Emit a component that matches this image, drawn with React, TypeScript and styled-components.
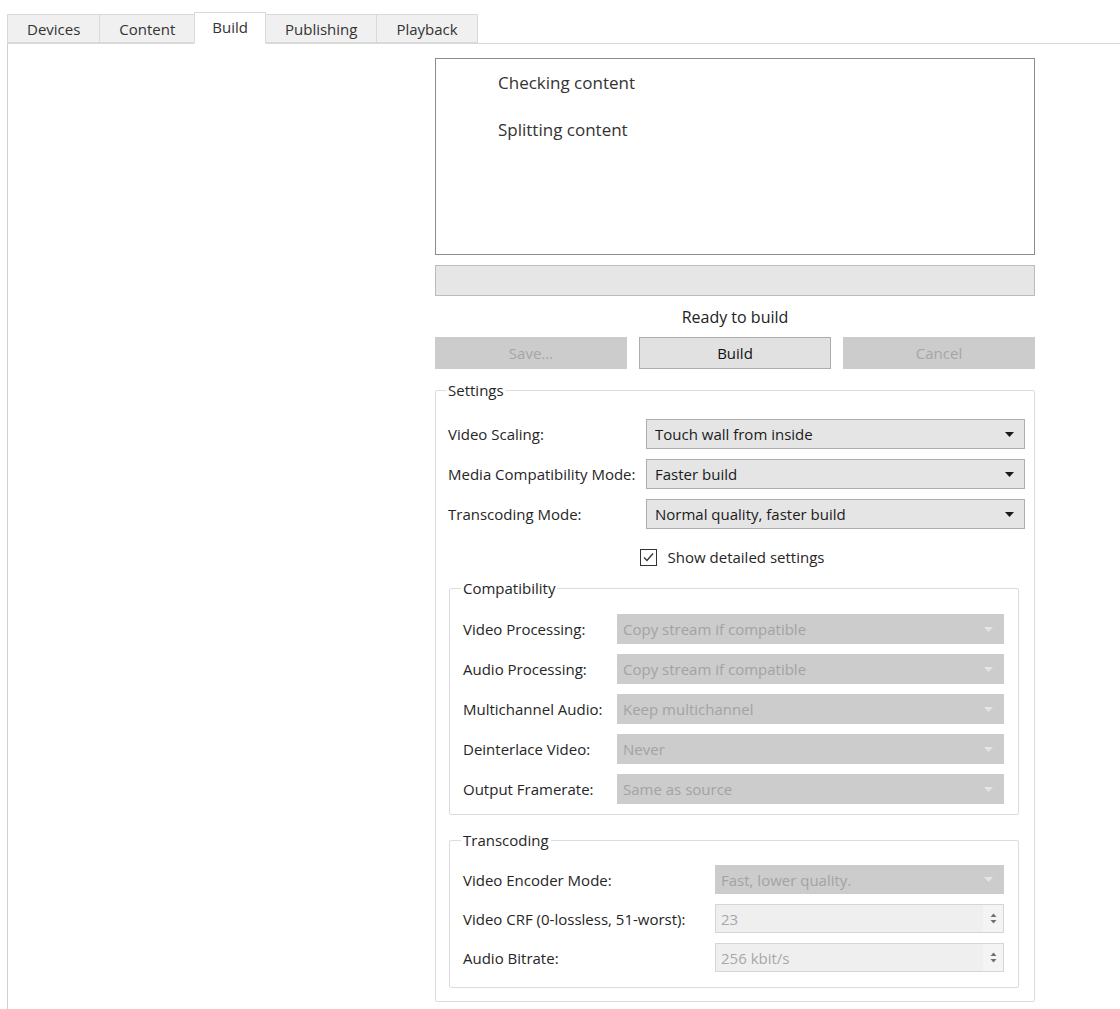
import styled, { createGlobalStyle } from 'styled-components';

const GlobalStyle = createGlobalStyle`
  html, body {
    margin: 0;
    background: #fff;
  }
  body {
    font-family: "Open Sans", "Noto Sans", sans-serif;
    font-size: 15px;
    color: #262626;
  }
`;

const Window = styled.div`
  display: flex;
  flex-direction: column;
  height: 1009px;
  box-sizing: border-box;
  padding: 12px 0 0 7px;
  overflow: hidden;
`;

const TabBar = styled.div`
  display: flex;
  align-items: flex-end;
  height: 31px;
  padding-left: 1px;
`;

const Tab = styled.div<{ $active?: boolean }>`
  position: relative;
  z-index: ${(p) => (p.$active ? 1 : 0)};
  display: flex;
  align-items: center;
  box-sizing: border-box;
  height: ${(p) => (p.$active ? 32 : 29)}px;
  margin: 0 0 ${(p) => (p.$active ? -1 : 0)}px -1px;
  padding: 0 ${(p) => (p.$active ? 17 : 19)}px ${(p) => (p.$active ? 2 : 0)}px;
  background: ${(p) => (p.$active ? '#fff' : '#f0f0f0')};
  border: 1px solid #d9d9d9;
  border-bottom-color: ${(p) => (p.$active ? '#fff' : '#d9d9d9')};
  color: #333;
`;

const Pane = styled.div`
  flex: 1;
  border-top: 1px solid #d9d9d9;
  border-left: 1px solid #d0d0d0;
  padding: 14px 0 0 427px;
`;

const Column = styled.div`
  display: flex;
  flex-direction: column;
  width: 600px;
`;

const LogBox = styled.div`
  height: 197px;
  box-sizing: border-box;
  border: 1px solid #8c8c8c;
  background: #fff;
  padding-left: 62px;
`;

const LogItem = styled.div`
  display: flex;
  align-items: center;
  height: 47px;
  font-size: 17px;
  color: #333;
`;

const ProgressBar = styled.div`
  height: 31px;
  margin-top: 10px;
  box-sizing: border-box;
  background: #e6e6e6;
  border: 1px solid #bcbcbc;
`;

const Status = styled.div`
  display: flex;
  align-items: center;
  justify-content: center;
  height: 41px;
  font-size: 16px;
  color: #222;
`;

const ButtonRow = styled.div`
  display: grid;
  grid-template-columns: repeat(3, 1fr);
  gap: 12px;
`;

const Button = styled.button`
  height: 32px;
  font: inherit;
  color: #111;
  background: #e1e1e1;
  border: 1px solid #adadad;

  &:disabled {
    color: #a6a6a6;
    background: #cccccc;
    border-color: #cccccc;
  }
`;

const Group = styled.fieldset<{ $pad: string; $margin: string }>`
  margin: ${(p) => p.$margin};
  padding: ${(p) => p.$pad};
  min-width: 0;
  border: 1px solid #dcdcdc;
  border-radius: 2px;
  display: flex;
  flex-direction: column;
`;

const Legend = styled.legend`
  padding: 0 2px;
  margin-left: -2px;
  line-height: 18px;
  color: #262626;
`;

const Rows = styled.div<{ $gap: number }>`
  display: flex;
  flex-direction: column;
  gap: ${(p) => p.$gap}px;
`;

const Row = styled.div<{ $label: number; $h: number }>`
  display: grid;
  grid-template-columns: ${(p) => p.$label}px 1fr;
  align-items: center;
  height: ${(p) => p.$h}px;
`;

const Label = styled.span`
  white-space: nowrap;
  color: #262626;
`;

const Combo = styled.div<{ $disabled?: boolean }>`
  display: flex;
  align-items: center;
  justify-content: space-between;
  height: 100%;
  box-sizing: border-box;
  padding: 0 10px 0 ${(p) => (p.$disabled ? 5 : 8)}px;
  background: ${(p) => (p.$disabled ? '#cccccc' : '#e5e5e5')};
  border: 1px solid ${(p) => (p.$disabled ? '#cccccc' : '#adadad')};
  color: ${(p) => (p.$disabled ? '#a3a3a3' : '#1a1a1a')};
`;

const ArrowWrap = styled.span<{ $disabled?: boolean }>`
  display: flex;
  color: ${(p) => (p.$disabled ? '#e4e4e4' : '#1a1a1a')};
`;

const Spin = styled.div`
  display: flex;
  align-items: center;
  justify-content: space-between;
  height: 100%;
  box-sizing: border-box;
  padding-left: 5px;
  background: #efefef;
  border: 1px solid #d6d6d6;
  color: #a8a8a8;
`;

const SpinButtons = styled.span`
  display: flex;
  align-items: center;
  justify-content: center;
  width: 20px;
  height: 100%;
  background: #f4f4f4;
  color: #707070;
`;

const CheckRow = styled.label`
  display: flex;
  align-items: center;
  justify-content: center;
  gap: 11px;
  height: 18px;
  margin-top: 19px;
  padding-right: 9px;
  color: #262626;
`;

const CheckBox = styled.span`
  display: flex;
  width: 17px;
  height: 17px;
  box-sizing: border-box;
  border: 1px solid #333;
  background: #fff;
`;

const DownArrow = ({ disabled }: { disabled?: boolean }) => (
  <ArrowWrap $disabled={disabled}>
    <svg width="9" height="5" viewBox="0 0 9 5">
      <path d="M0 0h9L4.5 5z" fill="currentColor" />
    </svg>
  </ArrowWrap>
);

const ComboBox = ({ value, disabled }: { value: string; disabled?: boolean }) => (
  <Combo $disabled={disabled}>
    <span>{value}</span>
    <DownArrow disabled={disabled} />
  </Combo>
);

const SpinBox = ({ value }: { value: string }) => (
  <Spin>
    <span>{value}</span>
    <SpinButtons>
      <svg width="7" height="13" viewBox="0 0 7 13">
        <path d="M0.5 5L3.5 1.5L6.5 5z" fill="currentColor" />
        <path d="M0.5 8L3.5 11.5L6.5 8z" fill="currentColor" />
      </svg>
    </SpinButtons>
  </Spin>
);

const tabs = ['Devices', 'Content', 'Build', 'Publishing', 'Playback'];

const mainSettings = [
  ['Video Scaling:', 'Touch wall from inside'],
  ['Media Compatibility Mode:', 'Faster build'],
  ['Transcoding Mode:', 'Normal quality, faster build'],
];

const compatSettings = [
  ['Video Processing:', 'Copy stream if compatible'],
  ['Audio Processing:', 'Copy stream if compatible'],
  ['Multichannel Audio:', 'Keep multichannel'],
  ['Deinterlace Video:', 'Never'],
  ['Output Framerate:', 'Same as source'],
];

export default function App() {
  return (
    <>
      <GlobalStyle />
      <Window>
        <TabBar>
          {tabs.map((t) => (
            <Tab key={t} $active={t === 'Build'}>
              {t}
            </Tab>
          ))}
        </TabBar>
        <Pane>
          <Column>
            <LogBox>
              <LogItem>Checking content</LogItem>
              <LogItem>Splitting content</LogItem>
            </LogBox>
            <ProgressBar />
            <Status>Ready to build</Status>
            <ButtonRow>
              <Button disabled>Save...</Button>
              <Button>Build</Button>
              <Button disabled>Cancel</Button>
            </ButtonRow>

            <Group $margin="12px 0 0" $pad="20px 9px 13px 12px">
              <Legend>Settings</Legend>
              <Rows $gap={10}>
                {mainSettings.map(([label, value]) => (
                  <Row key={label} $label={198} $h={30}>
                    <Label>{label}</Label>
                    <ComboBox value={value} />
                  </Row>
                ))}
              </Rows>

              <CheckRow>
                <CheckBox>
                  <svg width="15" height="15" viewBox="0 0 15 15">
                    <path d="M3 7.5L6 10.5L12 3.5" fill="none" stroke="#333" strokeWidth="1.3" />
                  </svg>
                </CheckBox>
                Show detailed settings
              </CheckRow>

              <Group $margin="13px 6px 0 1px" $pad="17px 14px 10px 13px">
                <Legend>Compatibility</Legend>
                <Rows $gap={10}>
                  {compatSettings.map(([label, value]) => (
                    <Row key={label} $label={154} $h={30}>
                      <Label>{label}</Label>
                      <ComboBox value={value} disabled />
                    </Row>
                  ))}
                </Rows>
              </Group>

              <Group $margin="16px 6px 0 1px" $pad="16px 14px 15px 13px">
                <Legend>Transcoding</Legend>
                <Rows $gap={10}>
                  <Row $label={252} $h={29}>
                    <Label>Video Encoder Mode:</Label>
                    <ComboBox value="Fast, lower quality." disabled />
                  </Row>
                  <Row $label={252} $h={29}>
                    <Label>Video CRF (0-lossless, 51-worst):</Label>
                    <SpinBox value="23" />
                  </Row>
                  <Row $label={252} $h={29}>
                    <Label>Audio Bitrate:</Label>
                    <SpinBox value="256 kbit/s" />
                  </Row>
                </Rows>
              </Group>
            </Group>
          </Column>
        </Pane>
      </Window>
    </>
  );
}
